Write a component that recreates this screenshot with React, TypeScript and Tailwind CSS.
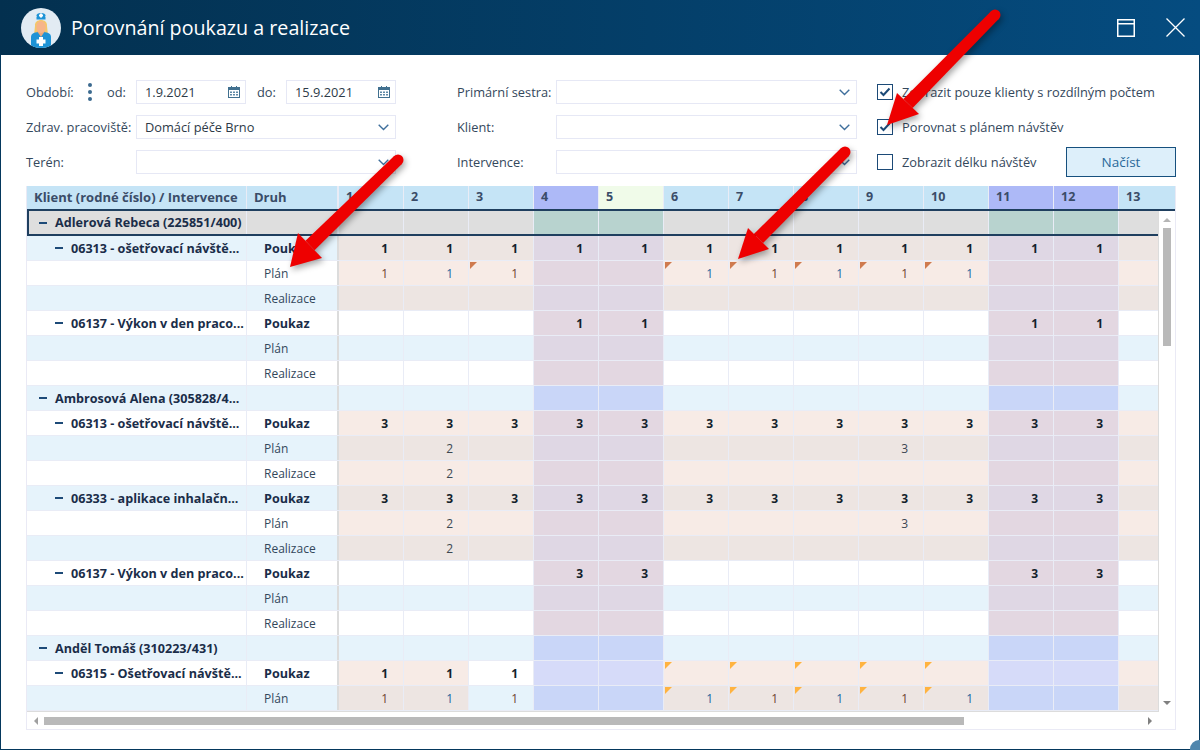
import React from "react";

const DAYS = [1, 2, 3, 4, 5, 6, 7, 8, 9, 10, 11, 12, 13];
const isWeekend = (d: number) => d === 4 || d === 5 || d === 11 || d === 12;

type Vals = Record<number, number>;
type Row = {
  kind: "group" | "item" | "sub";
  title?: string;
  druh?: string;
  strong?: boolean;
  pink?: boolean;
  blueWe?: boolean;
  noPink?: number[];
  vals?: Vals;
  thin?: boolean;
  tri?: number[];
  triColor?: string;
};

const all = (n: number): Vals => {
  const v: Vals = {};
  for (let d = 1; d <= 12; d++) v[d] = n;
  return v;
};
const we = (n: number): Vals => ({ 4: n, 5: n, 11: n, 12: n });

const ROWS: Row[] = [
  { kind: "item", title: "06313 - ošetřovací návště...", druh: "Poukaz", strong: true, pink: true, vals: all(1) },
  { kind: "sub", druh: "Plán", pink: true, thin: true, vals: { 1: 1, 2: 1, 3: 1, 6: 1, 7: 1, 8: 1, 9: 1, 10: 1 }, tri: [3, 6, 7, 8, 9, 10], triColor: "border-t-[#cf7a4e]" },
  { kind: "sub", druh: "Realizace", pink: true },
  { kind: "item", title: "06137 - Výkon v den praco...", druh: "Poukaz", strong: true, vals: we(1) },
  { kind: "sub", druh: "Plán" },
  { kind: "sub", druh: "Realizace" },
  { kind: "group", title: "Ambrosová Alena (305828/4...", blueWe: true },
  { kind: "item", title: "06313 - ošetřovací návště...", druh: "Poukaz", strong: true, pink: true, vals: all(3) },
  { kind: "sub", druh: "Plán", pink: true, thin: true, vals: { 2: 2, 9: 3 } },
  { kind: "sub", druh: "Realizace", pink: true, thin: true, vals: { 2: 2 } },
  { kind: "item", title: "06333 - aplikace inhalačn...", druh: "Poukaz", strong: true, pink: true, vals: all(3) },
  { kind: "sub", druh: "Plán", pink: true, thin: true, vals: { 2: 2, 9: 3 } },
  { kind: "sub", druh: "Realizace", pink: true, thin: true, vals: { 2: 2 } },
  { kind: "item", title: "06137 - Výkon v den praco...", druh: "Poukaz", strong: true, vals: we(3) },
  { kind: "sub", druh: "Plán" },
  { kind: "sub", druh: "Realizace" },
  { kind: "group", title: "Anděl Tomáš (310223/431)", blueWe: true },
  { kind: "item", title: "06315 - Ošetřovací návště...", druh: "Poukaz", strong: true, pink: true, blueWe: true, noPink: [3], vals: { 1: 1, 2: 1, 3: 1 }, tri: [6, 7, 8, 9, 10], triColor: "border-t-[#ffb340]" },
  { kind: "sub", druh: "Plán", pink: true, blueWe: true, noPink: [3], thin: true, vals: { 1: 1, 2: 1, 3: 1, 6: 1, 7: 1, 8: 1, 9: 1, 10: 1 }, tri: [6, 7, 8, 9, 10], triColor: "border-t-[#ffb340]" },
];

const numColor: Record<number, string> = { 1: "text-[#6e4630]", 2: "text-[#24669e]", 3: "text-[#6e4630]", 6: "text-[#24669e]", 7: "text-[#6e4630]", 8: "text-[#24669e]", 9: "text-[#6e4630]", 10: "text-[#24669e]" };

function cellBg(r: Row, d: number, blue: boolean) {
  if (isWeekend(d)) {
    if (r.blueWe) return blue ? "bg-[#c9d6f8]" : "bg-[#d6dbf9]";
    return blue ? "bg-[#dfd7e4]" : "bg-[#e3d7e1]";
  }
  if (r.pink && !(r.noPink && r.noPink.includes(d))) return blue ? "bg-[#ede5e2]" : "bg-[#f7ebe6]";
  return blue ? "bg-[#e6f3fb]" : "bg-white";
}

function Minus({ className }: { className: string }) {
  return <span className={"inline-block h-[2px] w-[8px] shrink-0 bg-[#1d4a78] " + className} />;
}

function Chevron() {
  return (
    <svg width="11" height="7" viewBox="0 0 11 7" fill="none" className="shrink-0">
      <path d="M0.7 0.8 L5.5 5.6 L10.3 0.8" stroke="#3f6f9c" strokeWidth="1.4" />
    </svg>
  );
}

function Calendar() {
  return (
    <svg width="12" height="12" viewBox="0 0 12 12" className="shrink-0">
      <rect x="0.5" y="1.5" width="11" height="10" fill="none" stroke="#41708f" />
      <rect x="0" y="1" width="12" height="3" fill="#41708f" />
      <rect x="3" y="0" width="1" height="2" fill="#41708f" />
      <rect x="8" y="0" width="1" height="2" fill="#41708f" />
      {[2, 5, 8].map((x) => (
        <React.Fragment key={x}>
          <rect x={x} y="5.5" width="2" height="1.5" fill="#5f89a6" />
          <rect x={x} y="8" width="2" height="1.5" fill="#5f89a6" />
        </React.Fragment>
      ))}
    </svg>
  );
}

function Field({ value, icon, className }: { value?: string; icon: "cal" | "chev"; className: string }) {
  return (
    <div className={"flex h-[24px] items-center justify-between border border-[#e6e8f5] bg-white pl-[8px] text-[12.8px] text-[#2d3a47] " + (icon === "cal" ? "pr-[5px] " : "pr-[6px] ") + className}>
      <span className="pt-[2px]">{value}</span>
      {icon === "cal" ? <Calendar /> : <Chevron />}
    </div>
  );
}

function Check({ checked, label }: { checked?: boolean; label: string }) {
  return (
    <div className="flex h-[24px] items-center">
      <span className="flex h-[16px] w-[16px] items-center justify-center border-[1.5px] border-[#1c4a77] bg-white">
        {checked && (
          <svg width="12" height="10" viewBox="0 0 12 10" fill="none">
            <path d="M1.5 5 L4.5 8 L10.5 1.5" stroke="#1c4a77" strokeWidth="2" />
          </svg>
        )}
      </span>
      <span className="ml-[9px] pt-[2px] text-[12.85px] text-[#34485c]">{label}</span>
    </div>
  );
}

function Arrow({ className, w, h, tail, tip, w1, w2 }: { className: string; w: number; h: number; tail: [number, number]; tip: [number, number]; w1: [number, number]; w2: [number, number] }) {
  const nx = (w1[0] + w2[0]) / 2;
  const ny = (w1[1] + w2[1]) / 2;
  const dx = nx - tail[0];
  const dy = ny - tail[1];
  const len = Math.hypot(dx, dy);
  const px = -dy / len;
  const py = dx / len;
  const a = 5.5;
  const b = 6.5;
  const shaft = `${tail[0] + px * a},${tail[1] + py * a} ${nx + px * b},${ny + py * b} ${nx - px * b},${ny - py * b} ${tail[0] - px * a},${tail[1] - py * a}`;
  return (
    <svg width={w} height={h} className={"pointer-events-none absolute drop-shadow-[2px_3px_3px_rgba(0,0,0,0.35)] " + className}>
      <circle cx={tail[0]} cy={tail[1]} r={a} fill="#ee0000" />
      <polygon points={shaft} fill="#ee0000" />
      <polygon points={`${tip[0]},${tip[1]} ${w1[0]},${w1[1]} ${w2[0]},${w2[1]}`} fill="#ee0000" />
    </svg>
  );
}

function GridRow({ r, i }: { r: Row; i: number }) {
  const blue = i % 2 === 0;
  const base = blue ? "bg-[#e6f3fb]" : "bg-white";
  return (
    <div className="flex h-[25px] w-[1152px] border-b border-[#e9ecf6]">
      <div className={"flex w-[220px] shrink-0 items-center border-r border-[#e9ecf6] pt-[2px] text-[12.6px] font-bold text-[#1a2d49] " + base}>
        {r.kind === "group" && (
          <>
            <Minus className="ml-[12px] mr-[8px] -mt-[2px]" />
            <span className="whitespace-nowrap">{r.title}</span>
          </>
        )}
        {r.kind === "item" && (
          <>
            <Minus className="ml-[28px] mr-[8px] -mt-[2px]" />
            <span className="whitespace-nowrap">{r.title}</span>
          </>
        )}
      </div>
      <div className={"flex w-[92px] shrink-0 items-center border-r-[2px] border-[#dcdcdc] pl-[17px] pt-[2px] " + base + " " + (r.strong ? "text-[12.6px] font-bold text-[#1a2d49]" : "text-[12px] text-[#33475b]")}>
        {r.druh}
      </div>
      {DAYS.map((d) => (
        <div key={d} className={"relative flex w-[65px] shrink-0 items-center justify-end border-r border-[#e9ecf6] pr-[15px] pt-[2px] " + cellBg(r, d, blue)}>
          {r.tri && r.tri.includes(d) && (
            <span className={"absolute left-[1px] top-[1px] h-0 w-0 border-r-[7px] border-t-[7px] border-r-transparent " + r.triColor} />
          )}
          {r.vals && r.vals[d] !== undefined && (
            <span className={r.thin ? "text-[12px] " + (r.vals[d] === 1 ? numColor[d] : "text-[#3c4752]") : "text-[12px] font-bold text-[#141f2c]"}>{r.vals[d]}</span>
          )}
        </div>
      ))}
    </div>
  );
}

export default function App() {
  return (
    <div className="relative h-[750px] w-[1200px] overflow-hidden bg-white font-['Open_Sans',sans-serif]">
      <div className="flex h-full flex-col border-x border-b border-[#05385d]">
        <header className="-mx-px flex h-[55px] shrink-0 items-center bg-gradient-to-r from-[#03304f] to-[#054c80] pl-[21px] pr-[15px]">
          <svg width="40" height="40" viewBox="0 0 40 40" className="shrink-0">
            <defs>
              <clipPath id="c"><circle cx="20" cy="20" r="20" /></clipPath>
            </defs>
            <circle cx="20" cy="20" r="20" fill="#e2ebf3" />
            <g clipPath="url(#c)">
              <path d="M14 18 C13 10 27 10 26 18 L27 27 L13 27 Z" fill="#f4c76a" />
              <path d="M10 40 L10 29 C10 25 14 24 20 24 C26 24 30 25 30 29 L30 40 Z" fill="#1e93d6" />
              <path d="M16 23 L20 29 L24 23 Z" fill="#e9a77d" />
              <ellipse cx="20" cy="19" rx="4.7" ry="6" fill="#f6b48a" />
              <ellipse cx="20" cy="7.5" rx="4.5" ry="2.6" fill="#1e93d6" />
              <rect x="15.5" y="9" width="9" height="2.5" fill="#1e93d6" />
              <rect x="19" y="5.5" width="2" height="4" fill="#fff" />
              <rect x="18" y="6.5" width="4" height="2" fill="#fff" />
              <rect x="18" y="29" width="4" height="9" fill="#fff" />
              <rect x="15.5" y="31.5" width="9" height="4" fill="#fff" />
            </g>
          </svg>
          <h1 className="ml-[10px] text-[19.7px] font-normal text-white">Porovnání poukazu a realizace</h1>
          <svg width="18" height="18" viewBox="0 0 18 18" fill="none" className="ml-auto mr-[31px]">
            <rect x="0.75" y="0.75" width="16.5" height="16.5" stroke="#fff" strokeWidth="1.5" />
            <rect x="0.75" y="4" width="16.5" height="1.5" fill="#fff" />
          </svg>
          <svg width="19" height="19" viewBox="0 0 19 19" fill="none">
            <path d="M0.5 0.5 L18.5 18.5 M18.5 0.5 L0.5 18.5" stroke="#fff" strokeWidth="1.3" />
          </svg>
        </header>

        <section className="flex h-[131px] shrink-0 pl-[25px] pt-[25px]">
          <div className="flex w-[370px] flex-col gap-[11px] text-[12.8px] text-[#34485c]">
            <div className="flex h-[24px] items-center">
              <span className="w-[54px] pt-[2px]">Období:</span>
              <svg width="8" height="20" viewBox="0 0 8 20" className="mr-[13px] ml-[6px]">
                <circle cx="4" cy="3" r="2" fill="#3c6a8f" />
                <circle cx="4" cy="10" r="2" fill="#3c6a8f" />
                <circle cx="4" cy="17" r="2" fill="#3c6a8f" />
              </svg>
              <span className="w-[29px] pt-[2px]">od:</span>
              <Field value="1.9.2021" icon="cal" className="w-[110px]" />
              <span className="w-[40px] pl-[11px] pt-[2px]">do:</span>
              <Field value="15.9.2021" icon="cal" className="w-[110px]" />
            </div>
            <div className="flex h-[24px] items-center">
              <span className="w-[110px] whitespace-nowrap pt-[2px]">Zdrav. pracoviště:</span>
              <Field value="Domácí péče Brno" icon="chev" className="w-[260px]" />
            </div>
            <div className="flex h-[24px] items-center">
              <span className="w-[110px] pt-[2px]">Terén:</span>
              <Field icon="chev" className="w-[260px]" />
            </div>
          </div>
          <div className="ml-[61px] flex w-[400px] flex-col gap-[11px] text-[12.8px] text-[#34485c]">
            {["Primární sestra:", "Klient:", "Intervence:"].map((l) => (
              <div key={l} className="flex h-[24px] items-center">
                <span className="w-[99px] pt-[2px]">{l}</span>
                <Field icon="chev" className="w-[301px]" />
              </div>
            ))}
          </div>
          <div className="ml-[20px] flex w-[299px] flex-col gap-[11px]">
            <Check checked label="Zobrazit pouze klienty s rozdílným počtem" />
            <Check checked label="Porovnat s plánem návštěv" />
            <div className="relative flex h-[24px] items-center justify-between">
              <Check label="Zobrazit délku návštěv" />
              <button className="absolute right-0 top-[-3px] h-[30px] w-[110px] border-[1.5px] border-[#16507e] bg-[#ddeffa] text-[13.5px] text-[#2a6a9a]">Načíst</button>
            </div>
          </div>
        </section>

        <section className="ml-[25px] flex h-[544px] w-[1150px] shrink-0 flex-col overflow-hidden border-x border-b border-[#eaeaf5]">
          <div className="flex h-[23px] w-[1148px] shrink-0 overflow-hidden text-[12.5px] font-bold text-[#3a4c68]">
            <div className="flex w-[220px] shrink-0 items-center whitespace-nowrap border-r border-[#e9ecf6] bg-[#c5e4f6] pl-[7px] text-[13px]">Klient (rodné číslo) / Intervence</div>
            <div className="flex w-[92px] shrink-0 items-center border-r-[2px] border-[#e9ecf6] bg-[#c5e4f6] pl-[7px] text-[13px]">Druh</div>
            {DAYS.map((d) => (
              <div key={d} className={"flex w-[65px] shrink-0 items-center border-r border-[#e9ecf6] pl-[7px] " + (d === 5 ? "bg-[#f0fbe9]" : isWeekend(d) ? "bg-[#adb9f7]" : "bg-[#c5e4f6]")}>
                {d}
              </div>
            ))}
          </div>
          <div className="flex h-[503px] shrink-0 border-t-2 border-[#1f3f5f]">
            <div className="h-[501px] w-[1132px] shrink-0 overflow-hidden border-r border-b border-[#dcdcdc]">
              <div className="flex h-[25px] w-[1152px] border-b-2 border-l-2 border-[#1f3f5f] text-[12.6px] font-bold text-[#1a2d49]">
                <div className="flex w-[218px] shrink-0 items-center border-r border-[#e9ecf6] bg-[#dedede] pt-[2px]">
                  <Minus className="ml-[10px] mr-[8px] -mt-[2px]" />
                  <span className="whitespace-nowrap">Adlerová Rebeca (225851/400)</span>
                </div>
                <div className="w-[92px] shrink-0 border-r-[2px] border-[#e9ecf6] bg-[#dedede]" />
                {DAYS.map((d) => (
                  <div key={d} className={"w-[65px] shrink-0 border-r border-[#e9ecf6] " + (isWeekend(d) ? "bg-[#b8d3cf]" : "bg-[#dedede]")} />
                ))}
              </div>
              {ROWS.map((r, i) => (
                <GridRow key={i} r={r} i={i} />
              ))}
            </div>
            <div className="flex w-[16px] shrink-0 flex-col items-center">
              <span className="mt-[7px] h-0 w-0 border-x-[4px] border-b-[4px] border-x-transparent border-b-[#b5b5b5]" />
              <span className="mt-[6px] h-[118px] w-[8px] bg-[#b9b9b9]" />
              <span className="mt-auto mb-[7px] h-0 w-0 border-x-[4px] border-t-[4px] border-x-transparent border-t-[#808080]" />
            </div>
          </div>
          <div className="flex h-[17px] shrink-0 items-center">
            <span className="ml-[7px] h-0 w-0 border-y-[4px] border-r-[4px] border-y-transparent border-r-[#a0a0a0]" />
            <span className="ml-[6px] h-[8px] w-[920px] bg-[#b9b9b9]" />
            <span className="ml-[184px] h-0 w-0 border-y-[4px] border-l-[4px] border-y-transparent border-l-[#808080]" />
          </div>
        </section>
      </div>

      <Arrow className="left-[870px] top-[0px]" w={140} h={140} tail={[125, 15]} tip={[17, 125]} w1={[27, 93]} w2={[49, 114]} />
      <Arrow className="left-[270px] top-[140px]" w={140} h={140} tail={[128, 20]} tip={[20, 127]} w1={[28, 93]} w2={[52, 118]} />
      <Arrow className="left-[720px] top-[140px]" w={140} h={130} tail={[125, 12]} tip={[18, 119]} w1={[28, 88]} w2={[49, 109]} />

      <span className="absolute bottom-[-8px] right-[-8px] h-[18px] w-[18px] rounded-full bg-[#4f86ad]" />
    </div>
  );
}
